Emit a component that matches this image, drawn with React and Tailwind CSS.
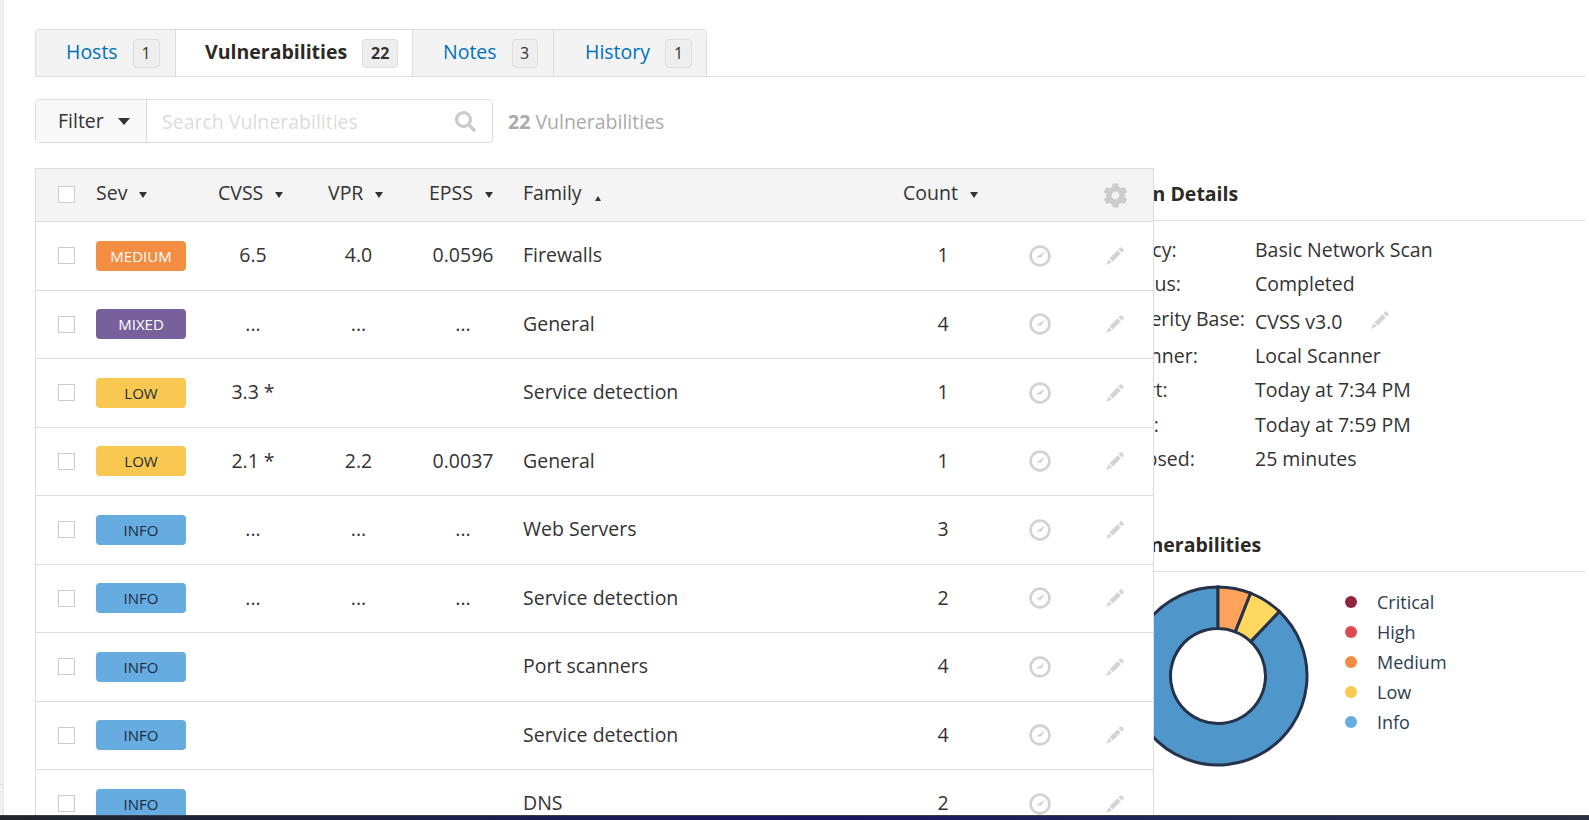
import { FaCog, FaSearch } from 'react-icons/fa'

const TABS = [
  { label: 'Hosts', count: 1, w: 'w-[139px]', badge: 'w-[27px]', ml: 'ml-[30px]' },
  { label: 'Vulnerabilities', count: 22, active: true, w: 'w-[237px]', badge: 'w-[36px]', ml: 'ml-[29px]' },
  { label: 'Notes', count: 3, w: 'w-[141px]', badge: 'w-[26px]', ml: 'ml-[30px]' },
  { label: 'History', count: 1, w: 'w-[153px]', badge: 'w-[27px]', ml: 'ml-[31px]' },
]

const SEV = {
  medium: { label: 'MEDIUM', cls: 'bg-[#f38d42] text-white' },
  mixed: { label: 'MIXED', cls: 'bg-[#78609c] text-white' },
  low: { label: 'LOW', cls: 'bg-[#f9c850] text-[#1c2b3a]' },
  info: { label: 'INFO', cls: 'bg-[#66ace1] text-[#1c2b3a]' },
}

const ROWS = [
  { sev: 'medium', cvss: '6.5', vpr: '4.0', epss: '0.0596', family: 'Firewalls', count: 1 },
  { sev: 'mixed', cvss: '...', vpr: '...', epss: '...', family: 'General', count: 4 },
  { sev: 'low', cvss: '3.3 *', vpr: '', epss: '', family: 'Service detection', count: 1 },
  { sev: 'low', cvss: '2.1 *', vpr: '2.2', epss: '0.0037', family: 'General', count: 1 },
  { sev: 'info', cvss: '...', vpr: '...', epss: '...', family: 'Web Servers', count: 3 },
  { sev: 'info', cvss: '...', vpr: '...', epss: '...', family: 'Service detection', count: 2 },
  { sev: 'info', cvss: '', vpr: '', epss: '', family: 'Port scanners', count: 4 },
  { sev: 'info', cvss: '', vpr: '', epss: '', family: 'Service detection', count: 4 },
  { sev: 'info', cvss: '', vpr: '', epss: '', family: 'DNS', count: 2 },
]

const DETAILS = [
  ['Policy:', 'Basic Network Scan'],
  ['Status:', 'Completed'],
  ['Severity Base:', 'CVSS v3.0'],
  ['Scanner:', 'Local Scanner'],
  ['Start:', 'Today at 7:34 PM'],
  ['End:', 'Today at 7:59 PM'],
  ['Elapsed:', '25 minutes'],
]

const LEGEND = [
  ['Critical', 'bg-[#91243e]'],
  ['High', 'bg-[#dd4b50]'],
  ['Medium', 'bg-[#f18c43]'],
  ['Low', 'bg-[#f8c851]'],
  ['Info', 'bg-[#67ace1]'],
]

const GRID = 'grid grid-cols-[60px_122px_110px_101px_94px_381px_78px_116px_35px_20px] items-center'

function Caret({ up }) {
  if (up) {
    return <span className="ml-[13px] mt-[6px] inline-block h-0 w-0 border-x-[3.5px] border-b-[5px] border-x-transparent border-b-[#333] align-middle" />
  }
  return <span className="ml-[12px] inline-block h-0 w-0 border-x-[4px] border-t-[6px] border-x-transparent border-t-[#333] align-middle" />
}

function Checkbox({ className = '' }) {
  return <span className={`ml-[22px] block h-[17px] w-[17px] border border-[#ccc] bg-white ${className}`} />
}

function ClockIcon() {
  return (
    <svg width="22" height="22" viewBox="0 0 22 22" fill="none">
      <circle cx="11" cy="11" r="9.4" stroke="#d2d2d2" strokeWidth="2.6" />
      <path d="M15.8 6.5 L12.3 12.6 L6.8 12.4 L10.5 10.2 Z" fill="#d2d2d2" />
    </svg>
  )
}

function PencilIcon({ className }) {
  return (
    <svg width="20" height="20" viewBox="0 0 20 20" className={className} fill="#d4d4d4">
      <path d="M4.6 12.2 L12.5 4.3 L15.8 7.6 L7.9 15.5 Z" />
      <path d="M3.8 13.2 L6.9 16.3 L1 19 Z" />
      <path d="M13.5 3.3 L15.3 1.5 Q16 0.9 16.7 1.5 L18.6 3.4 Q19.2 4.1 18.6 4.8 L16.8 6.6 Z" />
    </svg>
  )
}

function Donut() {
  // slices run clockwise from 12 o'clock
  const cx = 100, cy = 100, R = 89, r = 47.5
  const pt = (rad, deg) => {
    const a = (deg * Math.PI) / 180
    return `${(cx + rad * Math.sin(a)).toFixed(2)} ${(cy - rad * Math.cos(a)).toFixed(2)}`
  }
  const slice = (a, b, fill) => (
    <path
      d={`M${pt(r, a)} L${pt(R, a)} A${R} ${R} 0 ${b - a > 180 ? 1 : 0} 1 ${pt(R, b)} L${pt(r, b)} A${r} ${r} 0 ${b - a > 180 ? 1 : 0} 0 ${pt(r, a)} Z`}
      fill={fill}
      stroke="#25324a"
      strokeWidth="3"
    />
  )
  return (
    <svg width="200" height="200" viewBox="0 0 200 200" className="shrink-0">
      {slice(43.5, 360, '#4f96cb')}
      {slice(0, 21.5, '#ffa35c')}
      {slice(21.5, 43.5, '#ffd95f')}
    </svg>
  )
}

export default function App() {
  return (
    <div className="flex h-screen w-full flex-col overflow-hidden bg-white font-['Open_Sans',sans-serif] text-[19.5px] text-[#333]">
      <div className="flex min-h-0 flex-1">
        <div className="w-[4px] shrink-0 border-r border-[#e6e6e6] bg-[#f1f1f1]">
          <div className="h-[785px] border-b border-[#ddd]" />
        </div>
        <div className="min-w-0 flex-1 pl-[31px] pr-[4px] pt-[29px]">
          <div className="flex h-[48px] items-stretch border-b border-[#ddd]">
            <div className="flex overflow-hidden rounded-t-[4px] border border-b-0 border-[#ddd]">
              {TABS.map((t, i) => (
                <div
                  key={t.label}
                  className={`flex items-center ${t.w} ${i > 0 ? 'border-l border-[#ddd]' : ''} ${t.active ? 'bg-white' : 'bg-[#f3f3f3]'}`}
                >
                  <span className={`${t.ml} -mt-[2px] ${t.active ? 'font-bold text-[#2d2a26]' : 'text-[#0071b9]'}`}>{t.label}</span>
                  <span className={`ml-[15px] ${t.badge} flex h-[29px] items-center justify-center rounded-[4px] border border-[#ddd] bg-[#eee] text-[16px] ${t.active ? 'font-bold' : ''}`}>
                    {t.count}
                  </span>
                </div>
              ))}
            </div>
          </div>

          <div className="mt-[22px] flex items-center">
            <div className="flex h-[44px] w-[458px] overflow-hidden rounded-[4px] border border-[#ddd]">
              <div className="flex w-[111px] items-center border-r border-[#ddd] bg-[#f8f8f8] pl-[22px]">
                Filter
                <span className="ml-[14px] h-0 w-0 border-x-[6.5px] border-t-[7px] border-x-transparent border-t-[#333]" />
              </div>
              <div className="flex flex-1 items-center justify-between pl-[15px] pr-[16px] text-[#dcdcdc]">
                <span className="mt-[1px]">Search Vulnerabilities</span>
                <FaSearch className="text-[21px] text-[#ccc]" />
              </div>
            </div>
            <div className="ml-[15px] mt-[2px] text-[#aaa]"><b>22</b> Vulnerabilities</div>
          </div>

          <div className="mt-[25px] flex">
            <div className="relative z-10 w-[1119px] shrink-0 self-start border-x border-t border-[#ddd] bg-white">
              <div className={`${GRID} h-[53px] border-b border-[#ddd] bg-[#f4f4f4]`}>
                <Checkbox className="-mt-[2px]" />
                <div className="-mt-[4px]">Sev<Caret /></div>
                <div className="-mt-[4px]">CVSS<Caret /></div>
                <div className="-mt-[4px]">VPR<Caret /></div>
                <div className="-mt-[4px]">EPSS<Caret /></div>
                <div className="-mt-[4px]">Family<Caret up /></div>
                <div className="col-span-2 -ml-[1px] -mt-[4px]">Count<Caret /></div>
                <FaCog className="ml-[5px] text-[25px] text-[#ccc]" />
              </div>
              {ROWS.map((r, i) => (
                <div key={i} className={`${GRID} h-[68.5px] border-b border-[#ddd]`}>
                  <Checkbox />
                  <span className={`flex h-[30px] w-[90px] items-center justify-center rounded-[4px] text-[15px] ${SEV[r.sev].cls}`}>
                    {SEV[r.sev].label}
                  </span>
                  <div className="-mt-[2px] pr-[40px] text-center">{r.cvss}</div>
                  <div className="-mt-[2px] pr-[40px] text-center">{r.vpr}</div>
                  <div className="-mt-[2px] pr-[26px] text-center">{r.epss}</div>
                  <div className="-mt-[2px]">{r.family}</div>
                  <div className="-mt-[2px] text-center">{r.count}</div>
                  <div className="flex justify-center"><ClockIcon /></div>
                  <PencilIcon className="ml-[7px]" />
                  <div />
                </div>
              ))}
            </div>

            <div className="-ml-[35px] min-w-0 flex-1">
              <h2 className="flex h-[53px] items-center border-b border-[#ddd] pl-[1px] font-bold text-[#2d2a26]">Scan Details</h2>
              <div className="pt-[11px]">
                {DETAILS.map(([k, v]) => (
                  <div key={k} className={`flex items-center ${k === 'Severity Base:' ? 'h-[37px]' : 'h-[34.5px]'}`}>
                    <span className={`w-[136px] shrink-0 ${k === 'Severity Base:' ? '-mt-[2px]' : ''}`}>{k}</span>
                    <span className={k === 'Severity Base:' ? 'mt-[4px]' : ''}>{v}</span>
                    {k === 'Severity Base:' && <PencilIcon className="ml-[27px]" />}
                  </div>
                ))}
              </div>
              <h2 className="mt-[49px] flex h-[47px] items-center border-b border-[#ddd] pb-[6px] font-bold text-[#2d2a26]">Vulnerabilities</h2>
              <div className="mt-[4px] flex">
                <div className="-ml-[1px] shrink-0"><Donut /></div>
                <div className="ml-[27px] mt-[11px] text-[18px]">
                  {LEGEND.map(([label, cls]) => (
                    <div key={label} className="flex h-[30px] items-center">
                      <span className={`h-[12px] w-[12px] rounded-full ${cls}`} />
                      <span className="ml-[20px] text-[#2c3e50]">{label}</span>
                    </div>
                  ))}
                </div>
              </div>
            </div>
          </div>
        </div>
      </div>
      <div className="relative z-20 h-[5px] shrink-0 border-t border-[#3a3d46] bg-gradient-to-r from-[#23262a] via-[#1b1464] to-[#2a3142]" />
    </div>
  )
}
